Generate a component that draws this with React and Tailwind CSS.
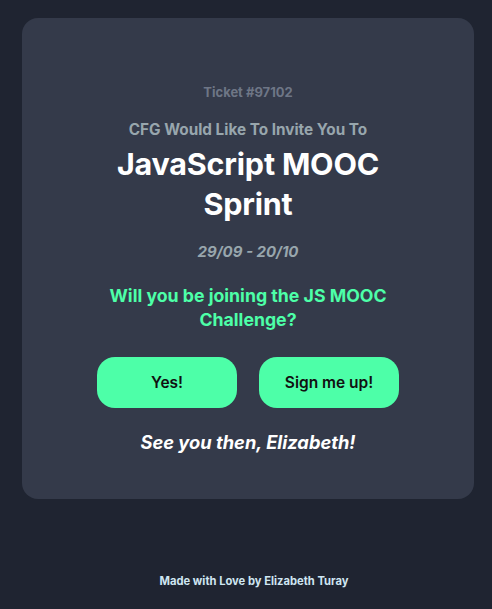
import React from "react";

const font = { fontFamily: "Inter, 'Noto Sans', sans-serif" };

const App = () => {
  return (
    <div className="min-h-screen bg-[#1f2431] pt-[18px] pb-[20px]" style={font}>
      {/* Card */}
      <div className="ml-[22px] w-[452px] h-[481px] bg-[#343a4a] rounded-2xl flex flex-col items-center text-center pt-[66px]">
        <p className="text-[13px] font-bold text-[#6e7686] leading-4">Ticket #97102</p>

        <p className="mt-[20px] text-[15.3px] font-bold text-[#98a6ad] leading-5">
          CFG Would Like To Invite You To
        </p>
        <h1 className="mt-[4px] text-[30.5px] font-bold text-white leading-[40px] w-[300px] tracking-[-0.2px]">
          JavaScript MOOC Sprint
        </h1>

        <p className="mt-[18px] text-[15px] font-bold italic text-[#98a6ad] leading-5">
          29/09 - 20/10
        </p>

        <p className="mt-[22px] text-[17.7px] font-bold text-[#4dffa8] leading-6 w-[320px]">
          Will you be joining the JS MOOC Challenge?
        </p>

        <div className="mt-[25px] flex gap-[22px]">
          <button className="w-[140px] h-[51px] rounded-[18px] bg-[#4dffa8] text-[15.5px] font-semibold text-[#111]">
            Yes!
          </button>
          <button className="w-[140px] h-[51px] rounded-[18px] bg-[#4dffa8] text-[15.5px] font-semibold text-[#111]">
            Sign me up!
          </button>
        </div>

        <p className="mt-[22px] text-[18.3px] font-bold italic text-white leading-6">
          See you then, Elizabeth!
        </p>
      </div>

      {/* Footer */}
      <p className="mt-[74px] pl-[16px] text-center text-[11.2px] font-bold text-[#cfe6f2]">
        Made with Love by Elizabeth Turay
      </p>
    </div>
  );
};

export default App;
